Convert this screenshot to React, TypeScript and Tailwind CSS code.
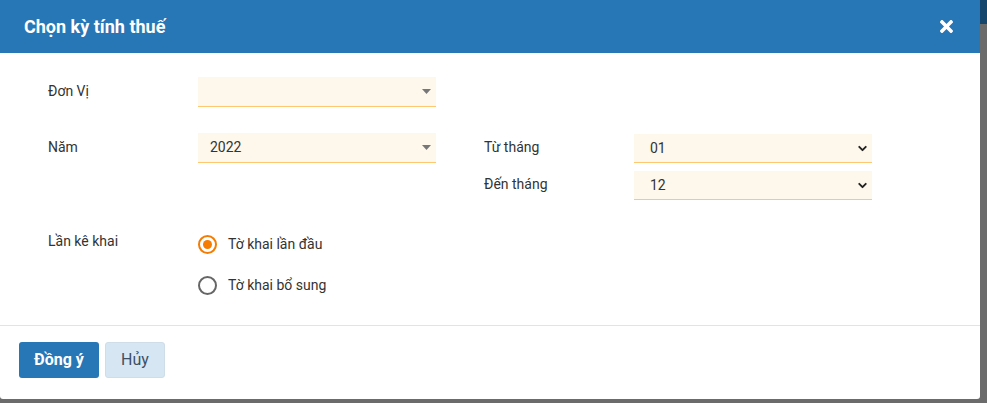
import { FC, ReactNode } from 'react';
import { FaTimes } from 'react-icons/fa';
import { ChevronDown } from 'lucide-react';

const Caret = () => (
  <svg width="9" height="5" viewBox="0 0 9 5" className="shrink-0">
    <path d="M0 0h9L4.5 5z" fill="#777" />
  </svg>
);

interface SelectProps {
  value?: string;
  icon?: 'caret' | 'chevron';
}

const FakeSelect: FC<SelectProps> = ({ value = '', icon = 'caret' }) => (
  <div
    className={`flex items-center justify-between w-[238px] bg-[#fef7ec] border-b border-[#fdc870] ${
      icon === 'caret' ? 'h-[30px] pl-3 pr-[5px]' : 'h-[29px] pl-4 pr-[3px]'
    }`}
  >
    <span className="text-[14px] text-[#333]">{value}</span>
    {icon === 'caret' ? (
      <Caret />
    ) : (
      <ChevronDown size={13} strokeWidth={3.5} color="#222" />
    )}
  </div>
);

const Label: FC<{ children: ReactNode }> = ({ children }) => (
  <div className="w-[150px] shrink-0 text-[14px] text-[#333] -mt-[2px]">{children}</div>
);

const Radio: FC<{ checked?: boolean; label: string }> = ({ checked, label }) => (
  <div className="flex items-center h-[26px]">
    <span
      className={`flex items-center justify-center w-[19px] h-[19px] rounded-full border-2 ${
        checked ? 'border-[#f57c00]' : 'border-[#666]'
      }`}
    >
      {checked && <span className="w-[9px] h-[9px] rounded-full bg-[#f57c00]" />}
    </span>
    <span className="ml-[11px] text-[14px] text-[#333]">{label}</span>
  </div>
);

export default function App() {
  return (
    <div
      className="relative w-[987px] h-[403px] bg-[#6b6b6b] overflow-hidden"
      style={{ fontFamily: 'Roboto, "Noto Sans", sans-serif' }}
    >
      <div className="h-[24px] bg-[#17466d]" />

      <div className="absolute left-0 top-0 w-[980px] h-[399px] bg-white rounded-b-[3px] flex flex-col">
        <div className="h-[53px] bg-[#2776b5] flex items-center justify-between pl-6 pr-[24px]">
          <h2 className="text-[18px] font-bold text-white">Chọn kỳ tính thuế</h2>
          <FaTimes className="text-white" size={19} />
        </div>

        <div className="h-[272px] pt-[24px] pl-[48px]">
          <div className="flex items-center">
            <Label>Đơn Vị</Label>
            <FakeSelect />
          </div>

          <div className="flex items-start mt-[26px]">
            <div className="flex items-center">
              <Label>Năm</Label>
              <FakeSelect value="2022" />
            </div>
            <div className="ml-[48px] mt-[1px] flex flex-col gap-[8px]">
              <div className="flex items-center">
                <Label>Từ tháng</Label>
                <FakeSelect value="01" icon="chevron" />
              </div>
              <div className="flex items-center">
                <Label>Đến tháng</Label>
                <FakeSelect value="12" icon="chevron" />
              </div>
            </div>
          </div>

          <div className="flex items-start mt-[31px]">
            <div className="w-[150px] shrink-0 text-[14px] text-[#333] leading-[20px]">Lần kê khai</div>
            <div className="flex flex-col gap-[15px]">
              <Radio checked label="Tờ khai lần đầu" />
              <Radio label="Tờ khai bổ sung" />
            </div>
          </div>
        </div>

        <div className="border-t border-[#e3e3e3] pt-[16px] pl-[19px] flex gap-[6px]">
          <button className="w-[80px] h-[36px] rounded-[3px] bg-[#2776b5] text-white text-[16px] font-bold">
            Đồng ý
          </button>
          <button className="w-[60px] h-[36px] rounded-[3px] bg-[#d6e6f3] border border-[#cfdde9] text-[#3d5066] text-[16px]">
            Hủy
          </button>
        </div>
      </div>
    </div>
  );
}
